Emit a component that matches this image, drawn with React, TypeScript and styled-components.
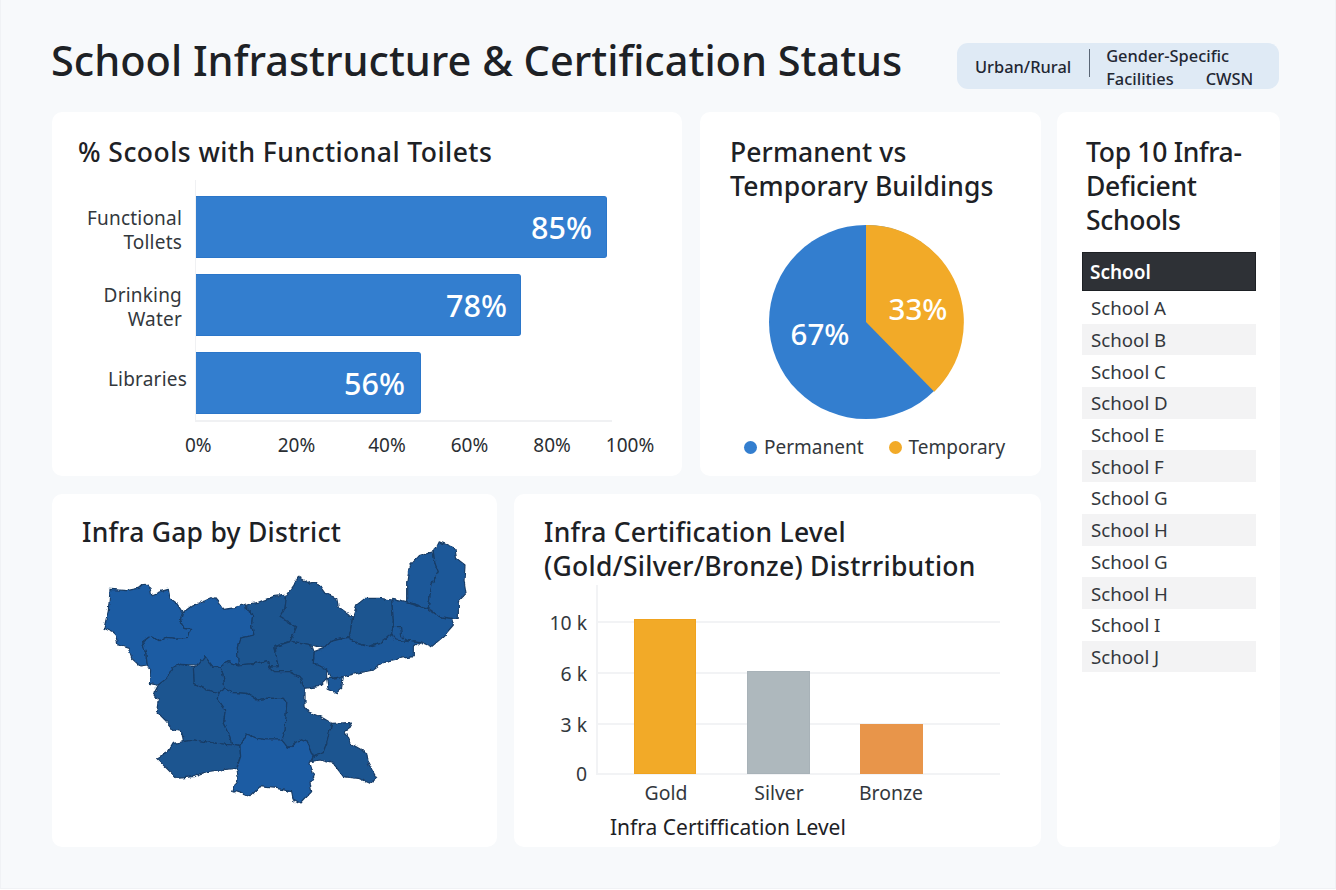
import React from "react";
import styled, { createGlobalStyle } from "styled-components";

const Global = createGlobalStyle`
  html, body { margin: 0; padding: 0; background: #fff; }
  * { box-sizing: border-box; }
  #root { font-family: "Noto Sans", "Open Sans", sans-serif; color: #1d2125; }
`;
const Page = styled.div`
  width: 1336px; height: 889px; background: #f7f9fb; border: 1px solid #f0f2f5; border-top: 0;
  padding: 0 55px 0 51px; overflow: hidden;
`;
const Header = styled.header`
  height: 112px; display: flex; justify-content: space-between; align-items: flex-start;
`;
const PageTitle = styled.h1`
  margin: 35px 0 0 -1px; font-size: 41.5px; line-height: 50px; font-weight: 500; color: #1d2125; white-space: nowrap;
`;
const FilterBar = styled.div`
  margin: 43px 1px 0 0; width: 322px; height: 46px; border-radius: 11px; background: #dfeaf5;
  display: flex; align-items: center; padding-left: 18px; font-size: 16.4px; color: #1f2733; font-weight: 500; flex: none;
`;
const FilterDivider = styled.span`
  width: 1px; height: 28px; background: #5a6675; margin: -6px 16px 0 18px;
`;
const FilterStack = styled.div`display: flex; flex-direction: column; line-height: 23px; padding-top: 2px;`;
const FilterLine = styled.div`display: flex; gap: 32px;`;
const Body = styled.div`display: grid; grid-template-columns: 989px 223px; column-gap: 16px; height: 735px;`;
const LeftColumn = styled.div`display: grid; grid-template-rows: 364px 353px; row-gap: 18px;`;
const TopRow = styled.div`display: grid; grid-template-columns: 630px 341px; column-gap: 18px;`;
const BottomRow = styled.div`display: grid; grid-template-columns: 445px 527px; column-gap: 17px;`;
const Card = styled.section<{ $top?: number; $left?: number }>`
  background: #fff; border-radius: 10px; padding: ${p => p.$top ?? 23}px 0 0 ${p => p.$left ?? 28}px; min-width: 0;
  overflow: hidden;
`;
const CardTitle = styled.h2<{ $track?: number; $nudge?: number }>`
  margin: 0 0 0 ${p => p.$nudge ?? 0}px; font-size: 26.5px; line-height: 34px; font-weight: 500; color: #1d2125;
  letter-spacing: ${p => p.$track ?? 0}px; white-space: nowrap;
`;
const BarChart = styled.div`display: grid; grid-template-columns: 115px 417px; margin-top: 11px;`;
const BarLabels = styled.div`display: flex; flex-direction: column; gap: 16px; padding-top: 16px;`;
const BarLabel = styled.div<{ $inset: number; $shift: number }>`
  height: 62px; display: flex; align-items: center; justify-content: flex-end; text-align: right;
  font-size: 19px; line-height: 24.5px; color: #33383d; letter-spacing: 0.2px; padding-right: ${p => p.$inset}px;
  padding-top: ${p => Math.max(p.$shift, 0) * 2}px; padding-bottom: ${p => Math.max(-p.$shift, 0) * 2}px;
`;
const Plot = styled.div`
  height: 242px; padding-top: 16px; display: flex; flex-direction: column; gap: 16px;
  border-left: 1px solid #f0f1f3; border-bottom: 2px solid #f0f1f3;
`;
const Bar = styled.div<{ $width: number; $pad: number }>`
  height: 62px; width: ${p => p.$width}px; background: #337ecf; border: 1px solid #2b76c9; border-left: 0;
  border-radius: 0 3px 3px 0; display: flex; align-items: center; justify-content: flex-end;
  padding: 0 ${p => p.$pad}px 1px 0; color: #fff; font-size: 30.5px; font-weight: 500;
`;
const Ticks = styled.div`
  display: flex; margin: 10px 0 0 105px; font-size: 19px; line-height: 26px; color: #2a2e33;
`;
const Tick = styled.span<{ $gap: number }>`margin-left: ${p => p.$gap}px;`;
const PieBox = styled.div`display: flex; justify-content: center; margin: 21px 0 0 -40px;`;
const Legend = styled.div`
  display: flex; gap: 25px; margin: 13px 0 0 14px; font-size: 19px; line-height: 28px; color: #33383d;
`;
const LegendItem = styled.div`display: flex; align-items: center; gap: 7px;`;
const Dot = styled.span<{ $color: string }>`width: 13px; height: 13px; border-radius: 50%; background: ${p => p.$color};`;
const MapArt = styled.svg`display: block; margin: -19px 0 0 -22px;`;
const ChartArt = styled.svg`display: block; margin-left: -30px;`;
const Table = styled.div`margin: 15px 0 0 -4px; width: 174px;`;
const TableHead = styled.div`
  height: 39px; background: #2e3136; border: 1px solid #1d2024; color: #fff; font-size: 19px; font-weight: 600;
  display: flex; align-items: center; padding-left: 7px; margin-bottom: 1px;
`;
const TableRow = styled.div<{ $alt: boolean }>`
  height: 31.7px; background: ${p => (p.$alt ? "#f3f3f4" : "#fff")}; font-size: 18.7px; color: #33383d;
  display: flex; align-items: center; padding-left: 9px;
`;

const light = "#1f5ca3", dark = "#1d5490", mid = "#1e5899";
const regions: [string, string][] = [
  [light, "150,178 200,182 235,175 252,160 270,175 275,195 300,185 325,178 330,205 350,220 368,248 362,270 372,295 395,298 385,322 345,325 320,322 300,335 272,318 248,335 258,375 262,405 240,408 215,385 205,355 175,345 165,310 132,295 145,240 148,210"],
  [light, "368,248 395,228 435,212 462,200 475,215 492,238 530,232 555,222 560,240 578,252 575,285 582,315 540,325 532,350 535,405 505,395 480,408 460,412 435,380 415,405 360,403 338,412 320,445 295,465 268,460 272,420 262,405 258,375 248,335 272,318 300,335 320,322 345,325 385,322 395,298 372,295 362,270"],
  [dark, "560,225 600,215 640,200 680,195 675,235 660,262 710,290 690,335 645,350 650,385 655,410 630,410 625,392 585,400 535,405 532,350 540,325 582,315 575,285 578,252 560,240"],
  [dark, "680,195 698,170 715,142 745,160 770,155 795,190 830,205 835,230 878,262 870,310 860,322 810,335 790,355 755,345 720,338 690,335 710,290 660,262 675,235"],
  [dark, "878,262 890,225 915,205 960,205 995,210 1000,270 998,310 960,340 925,350 890,340 862,322 870,310"],
  [mid, "862,322 890,340 925,350 960,340 998,310 1005,325 1040,330 1080,335 1060,350 1060,380 1020,385 975,395 940,420 890,430 850,440 815,445 800,420 760,400 762,365 790,355 810,335"],
  [mid, "1000,285 1025,285 1030,325 1045,335 1005,330 995,310"],
  [mid, "995,205 1040,215 1100,235 1140,260 1175,265 1180,285 1150,320 1115,350 1080,335 1040,330 1025,320 1022,290 1000,290 1000,270"],
  [mid, "1040,205 1040,160 1048,110 1075,80 1120,65 1125,100 1135,125 1115,165 1105,235 1040,215"],
  [mid, "1120,65 1135,35 1150,40 1185,55 1190,85 1215,105 1212,150 1218,190 1195,215 1195,265 1175,265 1140,260 1105,235 1115,165 1135,125 1125,100"],
  [dark, "645,350 690,335 720,338 755,345 762,365 760,400 800,420 800,445 775,470 735,475 718,440 690,425 640,425 625,412 655,410 650,385"],
  [mid, "800,445 815,445 850,440 845,475 830,488 805,478"],
  [dark, "480,408 505,395 535,405 585,400 625,392 630,410 625,412 640,425 690,425 718,440 735,475 735,530 745,545 790,565 815,580 800,640 790,665 760,678 745,640 725,630 700,640 685,655 665,630 675,600 680,520 670,505 620,505 590,510 560,490 520,488 495,478 490,440"],
  [dark, "415,405 435,380 460,412 480,408 490,440 495,478 478,488 440,480 402,460 400,410"],
  [dark, "338,412 360,403 400,410 402,460 440,480 478,488 472,505 497,540 490,580 510,620 515,645 470,640 400,630 370,635 365,605 340,600 315,570 290,545 295,510 282,490 295,465 320,445"],
  [mid, "478,488 495,478 520,488 560,490 590,510 620,505 670,505 680,520 675,600 665,630 620,630 590,625 560,612 540,650 515,645 510,620 490,580 497,540 472,505"],
  [dark, "370,635 400,630 470,640 515,645 540,650 542,680 530,715 480,720 440,725 400,740 350,745 320,715 290,685 325,665 340,640"],
  [light, "560,612 590,625 620,630 665,630 685,655 700,640 725,630 745,640 760,678 750,700 762,740 750,760 755,785 720,822 700,810 695,785 650,775 600,770 570,800 545,790 518,782 535,740 530,715 542,680 540,650"],
  [dark, "815,580 870,578 875,590 855,605 870,640 920,668 925,700 950,745 930,760 895,745 850,740 820,700 780,690 755,695 760,678 790,665 800,640"],
];

const schools = ["School A", "School B", "School C", "School D", "School E", "School F", "School G", "School H", "School G", "School H", "School I", "School J"];

const bars = [
  { lines: ["Functional", "Tollets"], value: "85%", width: 411, pad: 14, inset: 13, shift: 3 },
  { lines: ["Drinking", "Water"], value: "78%", width: 325, pad: 13, inset: 13, shift: 2 },
  { lines: ["Libraries"], value: "56%", width: 225, pad: 15, inset: 8, shift: -4 },
];
const ticks: [string, number][] = [["0%", 0], ["20%", 66], ["40%", 53], ["60%", 45], ["80%", 45], ["100%", 35]];

const axisText = { fontFamily: '"Noto Sans", sans-serif', fontSize: 19.4, fill: "#33383d" };

export default function App() {
  return (
    <Page>
      <Global />
      <Header>
        <PageTitle>School Infrastructure &amp; Certification Status</PageTitle>
        <FilterBar>
          <span>Urban/Rural</span>
          <FilterDivider />
          <FilterStack>
            <span>Gender-Specific</span>
            <FilterLine><span>Facilities</span><span>CWSN</span></FilterLine>
          </FilterStack>
        </FilterBar>
      </Header>
      <Body>
        <LeftColumn>
          <TopRow>
            <Card>
              <CardTitle $track={0.45} $nudge={-2}>% Scools with Functional Toilets</CardTitle>
              <BarChart>
                <BarLabels>
                  {bars.map(b => (
                    <BarLabel key={b.value} $inset={b.inset} $shift={b.shift}>
                      <div>{b.lines.map(l => <div key={l}>{l}</div>)}</div>
                    </BarLabel>
                  ))}
                </BarLabels>
                <Plot>
                  {bars.map(b => <Bar key={b.value} $width={b.width} $pad={b.pad}>{b.value}</Bar>)}
                </Plot>
              </BarChart>
              <Ticks>
                {ticks.map(([t, g]) => <Tick key={t} $gap={g}>{t}</Tick>)}
              </Ticks>
            </Card>
            <Card $left={30}>
              <CardTitle $track={0.1}>Permanent vs<br />Temporary Buildings</CardTitle>
              <PieBox>
                <svg width="196" height="196" viewBox="768 224 196 196">
                  <circle cx="866" cy="322" r="97" fill="#337ecf" />
                  <path d="M866 322 L866 225 A97 97 0 0 1 934.3 391.7 Z" fill="#f2aa28" />
                  <text x="820" y="345" textAnchor="middle" fontFamily='"Noto Sans", sans-serif' fontSize="29.5" fontWeight="500" fill="#fff">67%</text>
                  <text x="918" y="320" textAnchor="middle" fontFamily='"Noto Sans", sans-serif' fontSize="29.5" fontWeight="500" fill="#fff">33%</text>
                </svg>
              </PieBox>
              <Legend>
                <LegendItem><Dot $color="#337ecf" />Permanent</LegendItem>
                <LegendItem><Dot $color="#f2aa28" />Temporary</LegendItem>
              </Legend>
            </Card>
          </TopRow>
          <BottomRow>
            <Card $top={21} $left={30}>
              <CardTitle $track={0.25}>Infra Gap by District</CardTitle>
              <MapArt width="420" height="290" viewBox="0 0 1260 870">
                <defs>
                  <filter id="rough" x="0" y="0" width="1260" height="870" filterUnits="userSpaceOnUse">
                    <feTurbulence type="fractalNoise" baseFrequency="0.055" numOctaves="2" seed="4" />
                    <feDisplacementMap in="SourceGraphic" scale="14" xChannelSelector="R" yChannelSelector="G" />
                  </filter>
                </defs>
                <g filter="url(#rough)" stroke="#183c66" strokeWidth="3.5" strokeLinejoin="round">
                  {regions.map(([c, pts], i) => <polygon key={i} points={pts} fill={c} />)}
                </g>
              </MapArt>
            </Card>
            <Card $top={21} $left={30}>
              <CardTitle $track={0.25}>Infra Certification Level<br />(Gold/Silver/Bronze) Distrribution</CardTitle>
              <ChartArt width="527" height="264" viewBox="514 583 527 264">
                <path d="M597 585 V775 M597 774 H1000 M597 622 H1000 M597 673 H1000 M597 724 H1000" stroke="#f2f3f5" strokeWidth="2" fill="none" />
                <rect x="634.5" y="619.5" width="61" height="154" fill="#f2aa28" stroke="#f0a31f" />
                <rect x="747.5" y="671.5" width="62" height="102" fill="#aeb8bd" stroke="#a8b2b8" />
                <rect x="860" y="724" width="63" height="50" fill="#e8954a" />
                <g textAnchor="end" style={axisText}>
                  <text x="587" y="630">10 k</text>
                  <text x="587" y="681">6 k</text>
                  <text x="587" y="732">3 k</text>
                  <text x="587" y="781">0</text>
                </g>
                <g textAnchor="middle" style={axisText}>
                  <text x="666" y="800">Gold</text>
                  <text x="779" y="800">Silver</text>
                  <text x="891" y="800">Bronze</text>
                </g>
                <text x="610" y="835" fontFamily='"Noto Sans", sans-serif' fontSize="21" fill="#1d2125">Infra Certiffication Level</text>
              </ChartArt>
            </Card>
          </BottomRow>
        </LeftColumn>
        <Card $left={29}>
          <CardTitle $track={-0.3}>Top 10 Infra-<br />Deficient<br />Schools</CardTitle>
          <Table>
            <TableHead>School</TableHead>
            {schools.map((s, i) => <TableRow key={i} $alt={i % 2 === 1}>{s}</TableRow>)}
          </Table>
        </Card>
      </Body>
    </Page>
  );
}
